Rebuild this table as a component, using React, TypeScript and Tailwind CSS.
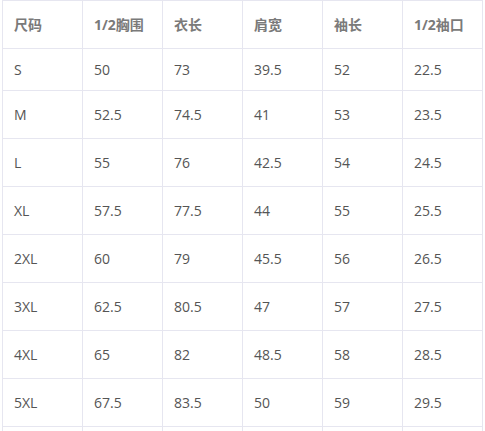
import React from "react";

const header = ["尺码", "1/2胸围", "衣长", "肩宽", "袖长", "1/2袖口"];
const rows = [
  ["S", "50", "73", "39.5", "52", "22.5"],
  ["M", "52.5", "74.5", "41", "53", "23.5"],
  ["L", "55", "76", "42.5", "54", "24.5"],
  ["XL", "57.5", "77.5", "44", "55", "25.5"],
  ["2XL", "60", "79", "45.5", "56", "26.5"],
  ["3XL", "62.5", "80.5", "47", "57", "27.5"],
  ["4XL", "65", "82", "48.5", "58", "28.5"],
  ["5XL", "67.5", "83.5", "50", "59", "29.5"],
];

export default function App() {
  return (
    <div
      className="w-[485px] h-[431px] overflow-hidden bg-white"
      style={{ fontFamily: '"Open Sans", "Noto Sans CJK SC", sans-serif' }}
    >
      <div className="ml-[2px] w-[481px] border-t border-l border-[#e6e6f0]">
        <div className="grid grid-cols-[repeat(6,80px)] h-[48px]">
          {header.map((h, i) => (
            <div
              key={i}
              className="border-r border-b border-[#e6e6f0] flex items-center pl-[11px] text-[14px] font-bold text-[#7a7a7a]"
            >
              {h}
            </div>
          ))}
        </div>
        {rows.map((r, ri) => (
          <div
            key={ri}
            className={
              ri === 0
                ? "grid grid-cols-[repeat(6,80px)] h-[42px]"
                : "grid grid-cols-[repeat(6,80px)] h-[48px]"
            }
          >
            {r.map((c, ci) => (
              <div
                key={ci}
                className="border-r border-b border-[#e6e6f0] flex items-center pl-[11px] text-[14px] text-[#555555]"
              >
                {c}
              </div>
            ))}
          </div>
        ))}
        <div className="grid grid-cols-[repeat(6,80px)] h-[48px]">
          {header.map((_, i) => (
            <div key={i} className="border-r border-[#e6e6f0]" />
          ))}
        </div>
      </div>
    </div>
  );
}
